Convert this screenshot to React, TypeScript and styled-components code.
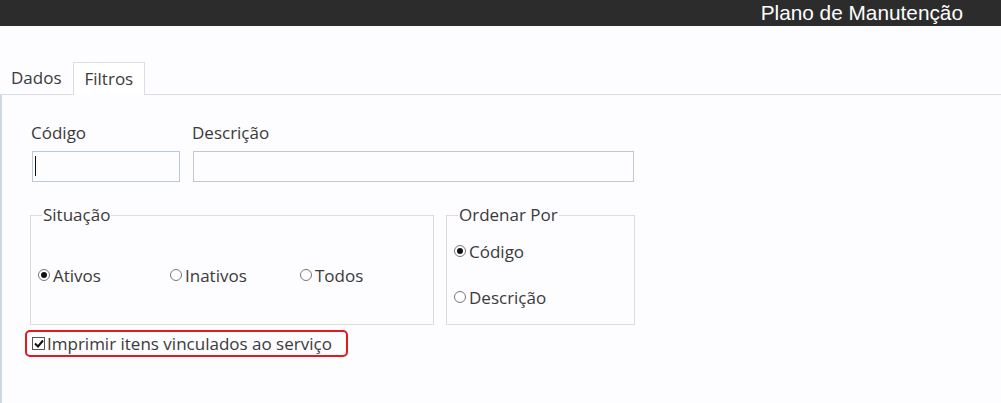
import React from 'react'
import styled, { createGlobalStyle } from 'styled-components'

const GlobalStyle = createGlobalStyle`
  html, body {
    margin: 0;
    padding: 0;
    background: #fdfcfe;
  }
  body {
    font-family: 'Open Sans', 'Noto Sans', sans-serif;
    color: #333;
  }
`

const Header = styled.header`
  height: 26px;
  background: #2c2c2c;
  display: flex;
  align-items: center;
  justify-content: flex-end;
  padding-right: 38px;
`

const Title = styled.h1`
  margin: 0;
  font-family: 'Liberation Sans', Arial, sans-serif;
  font-weight: normal;
  font-size: 20.8px;
  color: #fff;
`

const TabStrip = styled.div`
  margin-top: 35px;
  display: flex;
  align-items: flex-end;
  border-bottom: 1px solid #d9dde5;
`

const Tab = styled.div<{ active?: boolean }>`
  box-sizing: border-box;
  height: 33px;
  padding: 0 11px 1px;
  margin-left: -1px;
  display: flex;
  align-items: center;
  font-size: 17px;
  color: #3a3a3a;
  border: 1px solid ${p => (p.active ? '#d9dde5' : 'transparent')};
  border-bottom: none;
  background: ${p => (p.active ? '#fff' : 'transparent')};
  margin-bottom: ${p => (p.active ? '-1px' : '0')};
`

const Panel = styled.div`
  border-left: 2px solid #cfd7e5;
  padding: 25px 0 40px 30px;
  min-height: 250px;
`

const FieldRow = styled.div`
  display: flex;
  gap: 13px;
`

const Field = styled.div<{ width: number }>`
  position: relative;
  display: flex;
  flex-direction: column;
  width: ${p => p.width}px;
`

const Label = styled.label`
  font-size: 17px;
  color: #3a3a3a;
  height: 31px;
  line-height: 26px;
  margin-left: -1px;
`

const Input = styled.input<{ focused?: boolean }>`
  box-sizing: border-box;
  height: 31px;
  width: 100%;
  border: 1px solid ${p => (p.focused ? '#b9c9d9' : '#c6c6c6')};
  background: #fdfcfe;
  font-family: inherit;
  font-size: 17px;
  padding: 0 4px;
  outline: none;
`

const Caret = styled.span`
  position: absolute;
  left: 3px;
  bottom: 6px;
  width: 1px;
  height: 20px;
  background: #111;
`

const GroupRow = styled.div`
  display: flex;
  gap: 12px;
  margin-top: 24px;
  margin-left: -2px;
`

const Group = styled.fieldset<{ width: number }>`
  box-sizing: border-box;
  width: ${p => p.width}px;
  height: 119px;
  margin: 0;
  border: 1px solid #dcdcdc;
  padding: 0 0 0 7px;
`

const Legend = styled.legend`
  font-size: 17px;
  color: #3a3a3a;
  padding: 0 1px;
  margin-left: 4px;
  line-height: 18px;
`

const RadioLine = styled.div`
  display: grid;
  grid-template-columns: 132px 130px 100px;
  margin-top: 39px;
`

const RadioStack = styled.div`
  display: flex;
  flex-direction: column;
  gap: 22px;
  margin-top: 15px;
`

const Option = styled.label`
  display: flex;
  align-items: center;
  font-size: 17px;
  color: #3a3a3a;
  height: 24px;
`

const Dot = styled.span<{ checked?: boolean }>`
  box-sizing: border-box;
  width: 12px;
  height: 12px;
  border-radius: 50%;
  border: 1px solid #777;
  margin-right: 3px;
  display: flex;
  align-items: center;
  justify-content: center;
  background: #fff;
  &::after {
    content: '';
    width: 6px;
    height: 6px;
    border-radius: 50%;
    background: ${p => (p.checked ? '#111' : 'transparent')};
  }
`

const Highlight = styled.div`
  box-sizing: border-box;
  margin-top: 5px;
  margin-left: -7px;
  width: 323px;
  height: 27px;
  border: 2px solid #e3191c;
  border-radius: 5px;
  display: flex;
  align-items: center;
  padding-left: 5px;
  font-size: 17px;
  color: #3a3a3a;
`

const Check = styled.span`
  box-sizing: border-box;
  width: 13px;
  height: 13px;
  border: 1px solid #555;
  background: #fff;
  margin-right: 2px;
  display: flex;
  align-items: center;
  justify-content: center;
`

const Radio = ({ label, checked }: { label: string; checked?: boolean }) => (
  <Option>
    <Dot checked={checked} />
    {label}
  </Option>
)

export default function App() {
  return (
    <>
      <GlobalStyle />
      <Header>
        <Title>Plano de Manutenção</Title>
      </Header>
      <TabStrip>
        <Tab>Dados</Tab>
        <Tab active>Filtros</Tab>
      </TabStrip>
      <Panel>
        <FieldRow>
          <Field width={148}>
            <Label>Código</Label>
            <Input focused />
            <Caret />
          </Field>
          <Field width={441}>
            <Label>Descrição</Label>
            <Input />
          </Field>
        </FieldRow>
        <GroupRow>
          <Group width={404}>
            <Legend>Situação</Legend>
            <RadioLine>
              <Radio label="Ativos" checked />
              <Radio label="Inativos" />
              <Radio label="Todos" />
            </RadioLine>
          </Group>
          <Group width={189}>
            <Legend>Ordenar Por</Legend>
            <RadioStack>
              <Radio label="Código" checked />
              <Radio label="Descrição" />
            </RadioStack>
          </Group>
        </GroupRow>
        <Highlight>
          <Check>
            <svg width="10" height="9" viewBox="0 0 10 9">
              <path d="M1 4.5 L4 7.5 L9 1.5" stroke="#111" strokeWidth="2" fill="none" />
            </svg>
          </Check>
          Imprimir itens vinculados ao serviço
        </Highlight>
      </Panel>
    </>
  )
}
